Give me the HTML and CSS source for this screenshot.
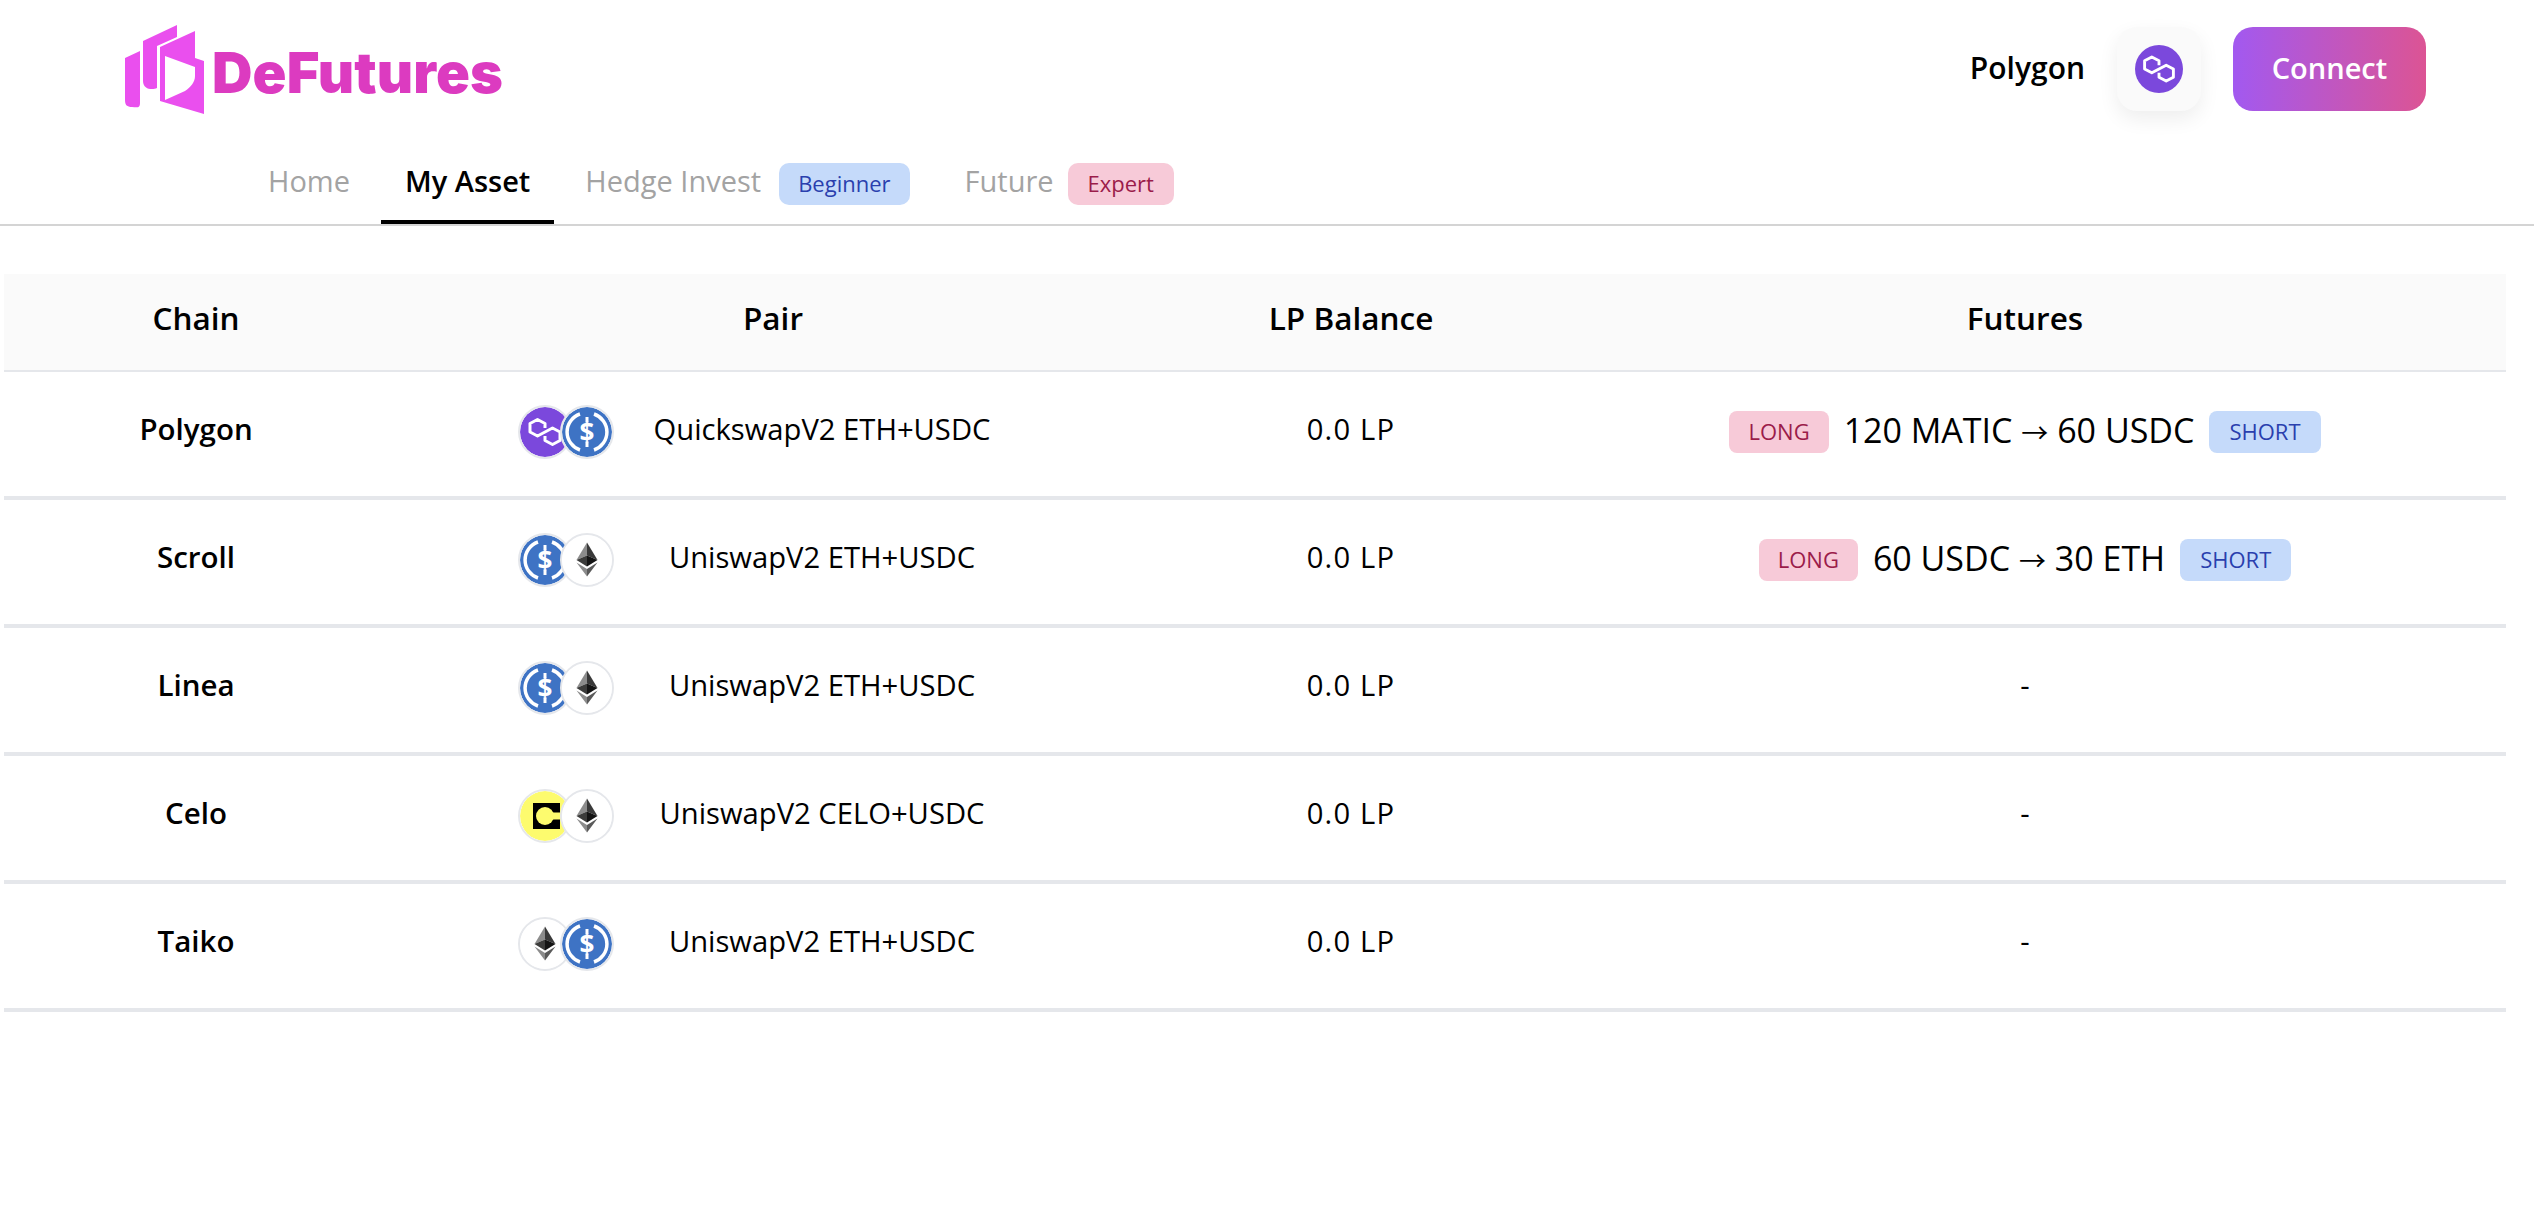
FILE: index.html
```html
<!DOCTYPE html>
<html lang="en">
<head>
<meta charset="utf-8">
<title>DeFutures</title>
<link rel="stylesheet" href="styles.css">
</head>
<body>
<svg class="defs" width="0" height="0" aria-hidden="true">
  <defs>
    <symbol id="i-matic" viewBox="0 0 100 100">
      <circle cx="50" cy="50" r="50" fill="#7b48dc"/>
      <path d="M50 42V33L35 25 20 33V50L35 58 50 50 65 42 80 50V67L65 75 50 67V58" fill="none" stroke="#fff" stroke-width="6" stroke-linejoin="round"/>
    </symbol>
    <symbol id="i-usdc" viewBox="0 0 100 100">
      <circle cx="50" cy="50" r="50" fill="#3e73c4"/>
      <path d="M36 14A38 38 0 0 0 36 86M64 14A38 38 0 0 1 64 86" fill="none" stroke="#fff" stroke-width="7"/>
      <text x="50" y="70" text-anchor="middle" class="dollar">$</text>
      <path d="M50 20V31M50 69V80" stroke="#fff" stroke-width="6"/>
    </symbol>
    <symbol id="i-eth" viewBox="0 0 100 100">
      <circle cx="50" cy="50" r="50" fill="#fff"/>
      <path d="M50 15V41L29 50Z" fill="#8c8c8c"/>
      <path d="M50 15V41L71 50Z" fill="#393939"/>
      <path d="M29 50 50 41V63Z" fill="#3c3c3b"/>
      <path d="M71 50 50 41V63Z" fill="#141414"/>
      <path d="M29 55 50 68V83Z" fill="#8c8c8c"/>
      <path d="M71 55 50 68V83Z" fill="#5a5a5a"/>
    </symbol>
    <symbol id="i-celo" viewBox="0 0 100 100">
      <circle cx="50" cy="50" r="50" fill="#fdfb6e"/>
      <rect x="26" y="24" width="54" height="52" fill="#000"/>
      <path d="M50 43H84V57H50Z" fill="#fdfb6e"/>
      <circle cx="50" cy="50" r="18" fill="#fdfb6e"/>
    </symbol>
  </defs>
</svg>
<header class="topbar">
  <div class="brandrow">
    <a class="brand">
      <svg class="logo" viewBox="0 0 80 92" aria-hidden="true">
        <path fill="#ea4fee" d="M0 34 15 27V79C15 85 11 83 7 83 2 83 0 81 0 76ZM18 17 52 1V13L32 22V64C28 66 18 66 18 57ZM35 23 70 7V34L79 37V90L35 77ZM40 32V76L60 67C66 63 70 58 70 52V43Z"/>
      </svg>
      <span class="wordmark">DeFutures</span>
    </a>
    <div class="account">
      <span class="chainname">Polygon</span>
      <span class="chainbtn"><svg class="chainicon"><use href="#i-matic"/></svg></span>
      <button class="connect">Connect</button>
    </div>
  </div>
  <nav class="tabs">
    <a class="tab">Home</a>
    <a class="tab active">My Asset</a>
    <a class="tab">Hedge Invest <span class="badge blue">Beginner</span></a>
    <a class="tab">Future <span class="badge pink">Expert</span></a>
  </nav>
</header>
<main class="content">
  <table class="assets">
    <colgroup>
      <col class="c-chain"><col class="c-pair"><col class="c-lp"><col class="c-fut">
    </colgroup>
    <thead>
      <tr><th>Chain</th><th>Pair</th><th>LP Balance</th><th>Futures</th></tr>
    </thead>
    <tbody>
      <tr>
        <td class="name txt">Polygon</td>
        <td><div class="pair"><span class="icons"><svg class="coin"><use href="#i-matic"/></svg><svg class="coin"><use href="#i-usdc"/></svg></span><span class="pairname">QuickswapV2 ETH+USDC</span></div></td>
        <td class="txt lp">0.0 LP</td>
        <td><div class="fut"><span class="tag pink">LONG</span><span class="futtext">120 MATIC <span class="arrow">→</span> 60 USDC</span><span class="tag blue">SHORT</span></div></td>
      </tr>
      <tr>
        <td class="name txt">Scroll</td>
        <td><div class="pair"><span class="icons"><svg class="coin"><use href="#i-usdc"/></svg><svg class="coin"><use href="#i-eth"/></svg></span><span class="pairname">UniswapV2 ETH+USDC</span></div></td>
        <td class="txt lp">0.0 LP</td>
        <td><div class="fut"><span class="tag pink">LONG</span><span class="futtext">60 USDC <span class="arrow">→</span> 30 ETH</span><span class="tag blue">SHORT</span></div></td>
      </tr>
      <tr>
        <td class="name txt">Linea</td>
        <td><div class="pair"><span class="icons"><svg class="coin"><use href="#i-usdc"/></svg><svg class="coin"><use href="#i-eth"/></svg></span><span class="pairname">UniswapV2 ETH+USDC</span></div></td>
        <td class="txt lp">0.0 LP</td>
        <td class="txt">-</td>
      </tr>
      <tr>
        <td class="name txt">Celo</td>
        <td><div class="pair"><span class="icons"><svg class="coin"><use href="#i-celo"/></svg><svg class="coin"><use href="#i-eth"/></svg></span><span class="pairname">UniswapV2 CELO+USDC</span></div></td>
        <td class="txt lp">0.0 LP</td>
        <td class="txt">-</td>
      </tr>
      <tr>
        <td class="name txt">Taiko</td>
        <td><div class="pair"><span class="icons"><svg class="coin"><use href="#i-eth"/></svg><svg class="coin"><use href="#i-usdc"/></svg></span><span class="pairname">UniswapV2 ETH+USDC</span></div></td>
        <td class="txt lp">0.0 LP</td>
        <td class="txt">-</td>
      </tr>
    </tbody>
  </table>
</main>
</body>
</html>
```

FILE: styles.css
```css
* { box-sizing: border-box; }
html, body { margin: 0; padding: 0; background: #fff; }
body { font-family: "Open Sans", "Noto Sans CJK KR", sans-serif; color: #000; }
.defs { position: absolute; }
.dollar { font-family: "Open Sans", sans-serif; font-weight: 700; font-size: 52px; fill: #fff; }

.topbar { border-bottom: 2px solid #d4d4d4; height: 226px; }
.brandrow { display: flex; justify-content: space-between; align-items: flex-start; padding: 24px 108px 0 125px; height: 146px; }
.brand { display: flex; align-items: center; gap: 7px; height: 92px; }
.logo { width: 80px; height: 92px; }
.wordmark { font-family: Inter, sans-serif; font-weight: 900; font-size: 56px; letter-spacing: 0.15px; color: #dc3bc0; line-height: 1; padding-top: 6px; }
.account { display: flex; align-items: center; padding-top: 3px; }
.chainname { font-size: 30px; font-weight: 600; margin-right: 32px; padding-bottom: 4px; }
.chainbtn { width: 84px; height: 84px; border-radius: 20px; background: #fafafa; box-shadow: 0 8px 20px rgba(0,0,0,.07); display: flex; align-items: center; justify-content: center; margin-right: 32px; }
.chainicon { width: 48px; height: 48px; }
.connect { width: 193px; height: 84px; border: 0; border-radius: 20px; background: linear-gradient(90deg, #a259f0, #dc5494); color: #fff; font: 600 29px "Open Sans", sans-serif; padding-bottom: 4px; }

.tabs { display: flex; align-items: flex-start; padding-left: 244px; gap: 7px; height: 78px; }
.tab { display: flex; align-items: center; gap: 18px; height: 78px; padding: 0 24px 10px; font-size: 29px; color: #a3a3a3; white-space: nowrap; }
.tab.active { color: #000; font-weight: 600; border-bottom: 4px solid #000; padding-bottom: 6px; }
.badge { font-size: 22px; height: 42px; border-radius: 10px; display: inline-flex; align-items: center; margin-top: 8px; padding: 0 19px 2px; }
.badge.pink { padding: 0 20px 2px; margin-left: -4px; }
.blue { background: #c5dafa; color: #2a3fae; }
.pink { background: #f7cad8; color: #9b1c4a; }

.content { padding: 48px 28px 0 4px; }
.assets { width: 2502px; table-layout: fixed; border-collapse: separate; border-spacing: 0; }
.c-chain { width: 384px; } .c-pair { width: 770px; } .c-lp { width: 386px; } .c-fut { width: 962px; }
th { height: 98px; background: #fafafa; border-bottom: 2px solid #e5e7eb; font-size: 31.5px; font-weight: 600; text-align: center; padding: 0 0 10px; }
td { height: 128px; border-bottom: 4px solid #e5e7eb; font-size: 29.2px; text-align: center; padding: 0 0 4px; }
td.txt { padding-bottom: 11px; }
td.lp { letter-spacing: 1.2px; }
td.name { font-weight: 600; font-size: 29.5px; }
.pair { display: grid; grid-template-columns: 98px 412px; width: 510px; margin: 0 auto; align-items: center; }
.pairname { padding-bottom: 7px; }
.icons { display: flex; }
.coin { width: 54px; height: 54px; border: 2px solid #e5e7eb; border-radius: 50%; background: #fff; flex: none; }
.coin + .coin { margin-left: -12px; }
.fut { display: flex; justify-content: center; align-items: center; gap: 15px; }
.futtext { font-size: 34px; white-space: nowrap; padding-bottom: 5px; }
.arrow { font-size: 27px; }
.tag { height: 42px; font-size: 22px; border-radius: 8px; padding: 0 19px 2px; display: inline-flex; align-items: center; }
.tag.blue { padding: 0 20px 2px; }
```
